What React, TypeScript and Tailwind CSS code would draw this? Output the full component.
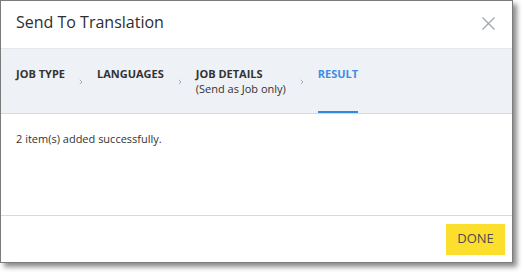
const steps = [
  { label: 'JOB TYPE' },
  { label: 'LANGUAGES' },
  { label: 'JOB DETAILS', sub: '(Send as Job only)' },
  { label: 'RESULT', active: true },
];

function Chevron() {
  return (
    <svg width="4" height="6" viewBox="0 0 4 6" className="self-center mt-[1px]">
      <polyline points="0.8,0.8 3,3 0.8,5.2" fill="none" stroke="#a3abb5" strokeWidth="1" />
    </svg>
  );
}

export default function App() {
  return (
    <div className="w-[523px] h-[272px] bg-white font-['Open_Sans',sans-serif] text-[#333]">
      <div className="w-[513px] h-[263px] flex flex-col border border-[#7b7b7b] bg-white shadow-[4px_4px_5px_rgba(0,0,0,0.45)]">
        {/* header */}
        <div className="h-[48px] flex items-start justify-between pl-[15px] pr-[17px] pt-[10px] border-b border-[#e3e6ea]">
          <h2 className="text-[16px] leading-[22px] text-[#2e2e2e]">Send To Translation</h2>
          <svg width="13" height="13" viewBox="0 0 13 13" className="mt-[6px]">
            <path d="M0.5 0.5 L12.5 12.5 M12.5 0.5 L0.5 12.5" stroke="#9ea7b2" strokeWidth="1.3" fill="none" />
          </svg>
        </div>

        {/* steps */}
        <div className="h-[65px] flex gap-[14px] pl-[15px] bg-[#eef1f5] border-b border-[#d6dadf] text-[11px] leading-[15px]">
          {steps.map((s, i) => (
            <div key={s.label} className="flex gap-[14px]">
              <div
                className={`pt-[17px] ${
                  s.active ? 'text-[#3a8ee6] border-b-2 border-[#2f8ae6]' : 'text-[#333]'
                }`}
              >
                <div className="font-bold">{s.label}</div>
                {s.sub && <div>{s.sub}</div>}
              </div>
              {i < steps.length - 1 && <Chevron />}
            </div>
          ))}
        </div>

        {/* body */}
        <div className="flex-1 pl-[15px] pt-[17px] text-[11px] leading-[15px] border-b border-[#d9d9d9]">
          2 item(s) added successfully.
        </div>

        {/* footer */}
        <div className="h-[46px] flex items-center justify-end pr-[7px]">
          <button className="w-[59px] h-[31px] bg-[#fcde2c] text-[13px] text-[#4d4d4d]">DONE</button>
        </div>
      </div>
    </div>
  );
}
